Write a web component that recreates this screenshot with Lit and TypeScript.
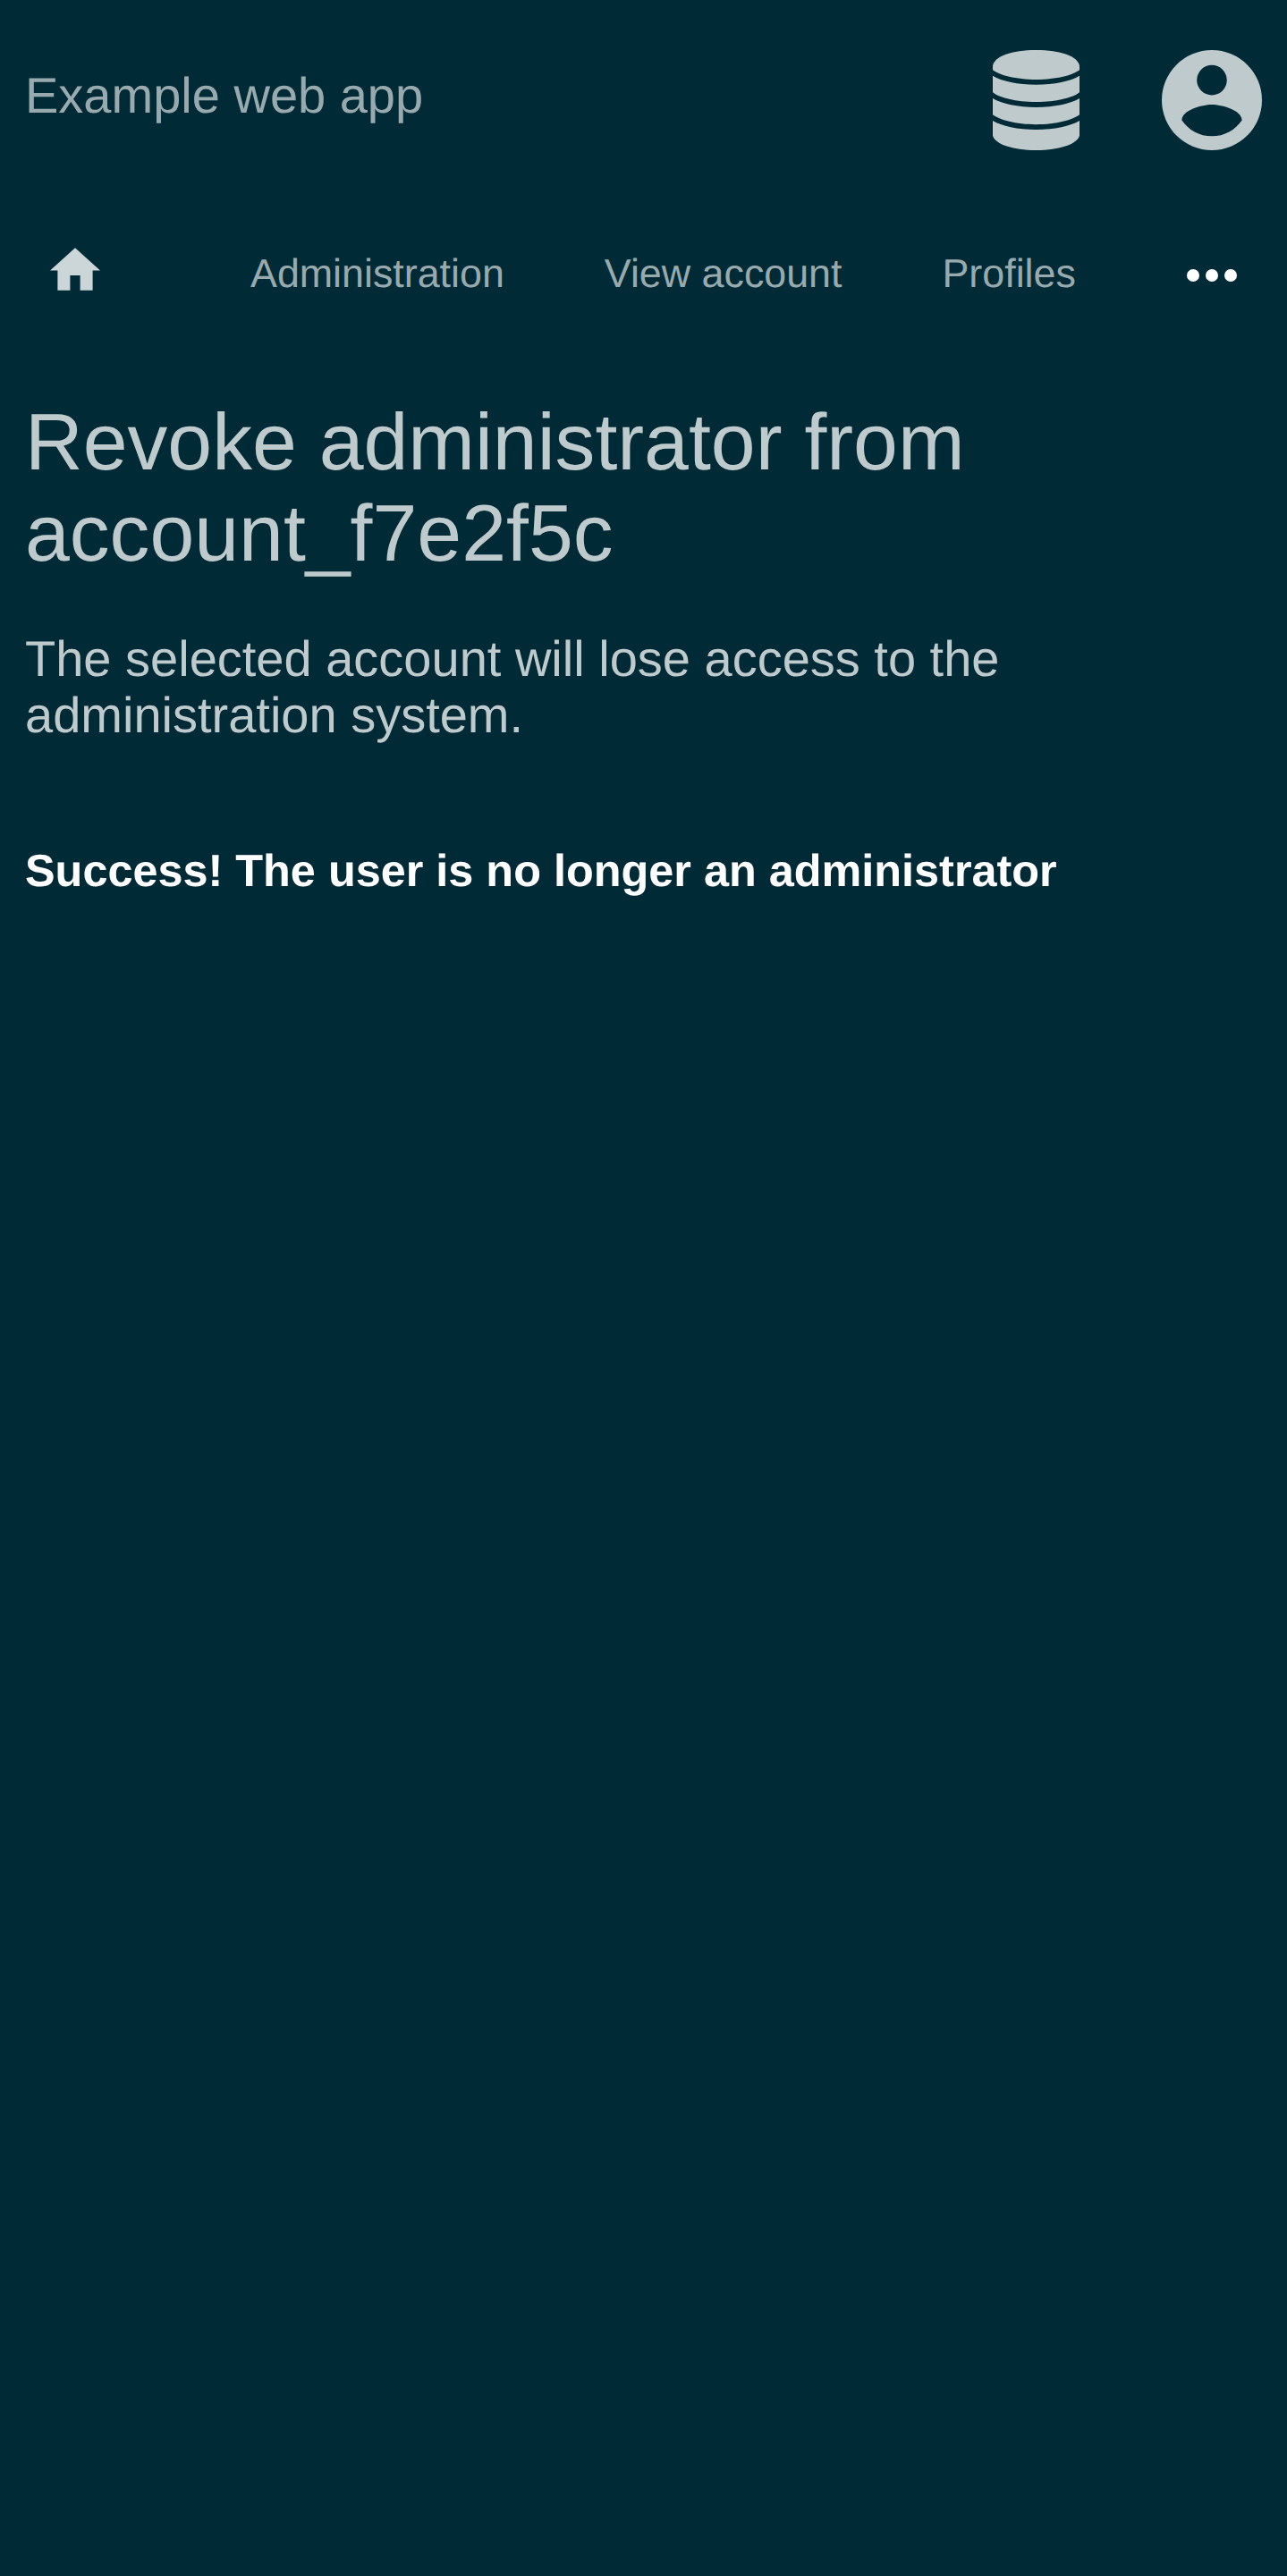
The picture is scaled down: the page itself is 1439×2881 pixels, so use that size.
import { LitElement, html, css } from "lit";
import { customElement } from "lit/decorators.js";

@customElement("app-root")
export class AppRoot extends LitElement {
  static styles = css`
    :host {
      display: block;
      box-sizing: border-box;
      min-height: 2881px;
      background: #002b36;
      color: #bfcacd;
      font-family: "Liberation Sans", Arial, sans-serif;
      font-size: 56px;
      line-height: 63px;
      text-rendering: geometricPrecision;
    }
    svg { display: block; fill: currentColor; }
    .top {
      display: flex;
      align-items: center;
      height: 224px;
      padding: 0 28.5px 0 28px;
    }
    .brand { flex: 1; color: #99aaaf; padding-bottom: 11px; }
    .account { margin-left: 91.5px; }
    .nav {
      display: flex;
      align-items: center;
      height: 168px;
      padding: 0 56.5px 0 56px;
      font-size: 44.8px;
      line-height: 52px;
      color: #99aaaf;
    }
    .home { color: #ccd5d7; margin-right: 168px; padding-bottom: 14px; }
    .link { margin-right: 112px; padding-bottom: 4px; }
    .more { color: #fff; margin-left: auto; }
    main { padding: 51px 28px 0; }
    h1 {
      margin: 0;
      font-size: 89.6px;
      line-height: 102px;
      font-weight: 400;
    }
    p { margin: 58px 0 0; max-width: 1250px; }
    .status {
      margin-top: 115px;
      font-size: 50.4px;
      line-height: 56px;
      font-weight: 700;
      color: #fff;
    }
  `;

  render() {
    return html`
      <header class="top">
        <div class="brand">Example web app</div>
        <svg class="database" width="97" height="112" viewBox="0 0 97 112">
          <path d="M0 17.500C2 7 21 0 48.500 0S95 7 97 17.500V22.300C90 28 71 33 48.500 33S7 28 0 22.300Z" />
          <path d="M0 28.800C10 35 28 38.700 48.500 38.700S87 35 97 28.800V47.200C90 53 71 58 48.500 58S7 53 0 47.200Z" />
          <path d="M0 54C10 60 28 63.900 48.500 63.900S87 60 97 54V72.300C90 78 71 83.200 48.500 83.200S7 78 0 72.300Z" />
          <path d="M0 79C10 85 28 89 48.500 89S87 85 97 79V95.500C95 105 75 112 48.500 112S2 105 0 95.500Z" />
        </svg>
        <svg class="account" width="112" height="112" viewBox="2 2 20 20">
          <path d="M12,19.200C9.500,19.200 7.290,17.920 6,16C6.030,14 10,12.900 12,12.900C14,12.900 17.970,14 18,16C16.710,17.920 14.500,19.200 12,19.200M12,5A3,3 0 0,1 15,8A3,3 0 0,1 12,11A3,3 0 0,1 9,8A3,3 0 0,1 12,5M12,2A10,10 0 0,0 2,12A10,10 0 0,0 12,22A10,10 0 0,0 22,12A10,10 0 0,0 12,2Z" />
        </svg>
      </header>
      <nav class="nav">
        <div class="home">
          <svg width="56" height="48" viewBox="2 3 20 17">
            <path d="M10,20V14H14V20H19V12H22L12,3L2,12H5V20H10Z" />
          </svg>
        </div>
        <div class="link">Administration</div>
        <div class="link">View account</div>
        <div class="link">Profiles</div>
        <svg class="more" width="56" height="14" viewBox="0 0 56 14">
          <circle cx="7" cy="7" r="7" /><circle cx="28" cy="7" r="7" /><circle cx="49" cy="7" r="7" />
        </svg>
      </nav>
      <main>
        <h1>Revoke administrator from<br />account_f7e2f5c</h1>
        <p>The selected account will lose access to the administration system.</p>
        <div class="status">Success! The user is no longer an administrator</div>
      </main>
    `;
  }
}
